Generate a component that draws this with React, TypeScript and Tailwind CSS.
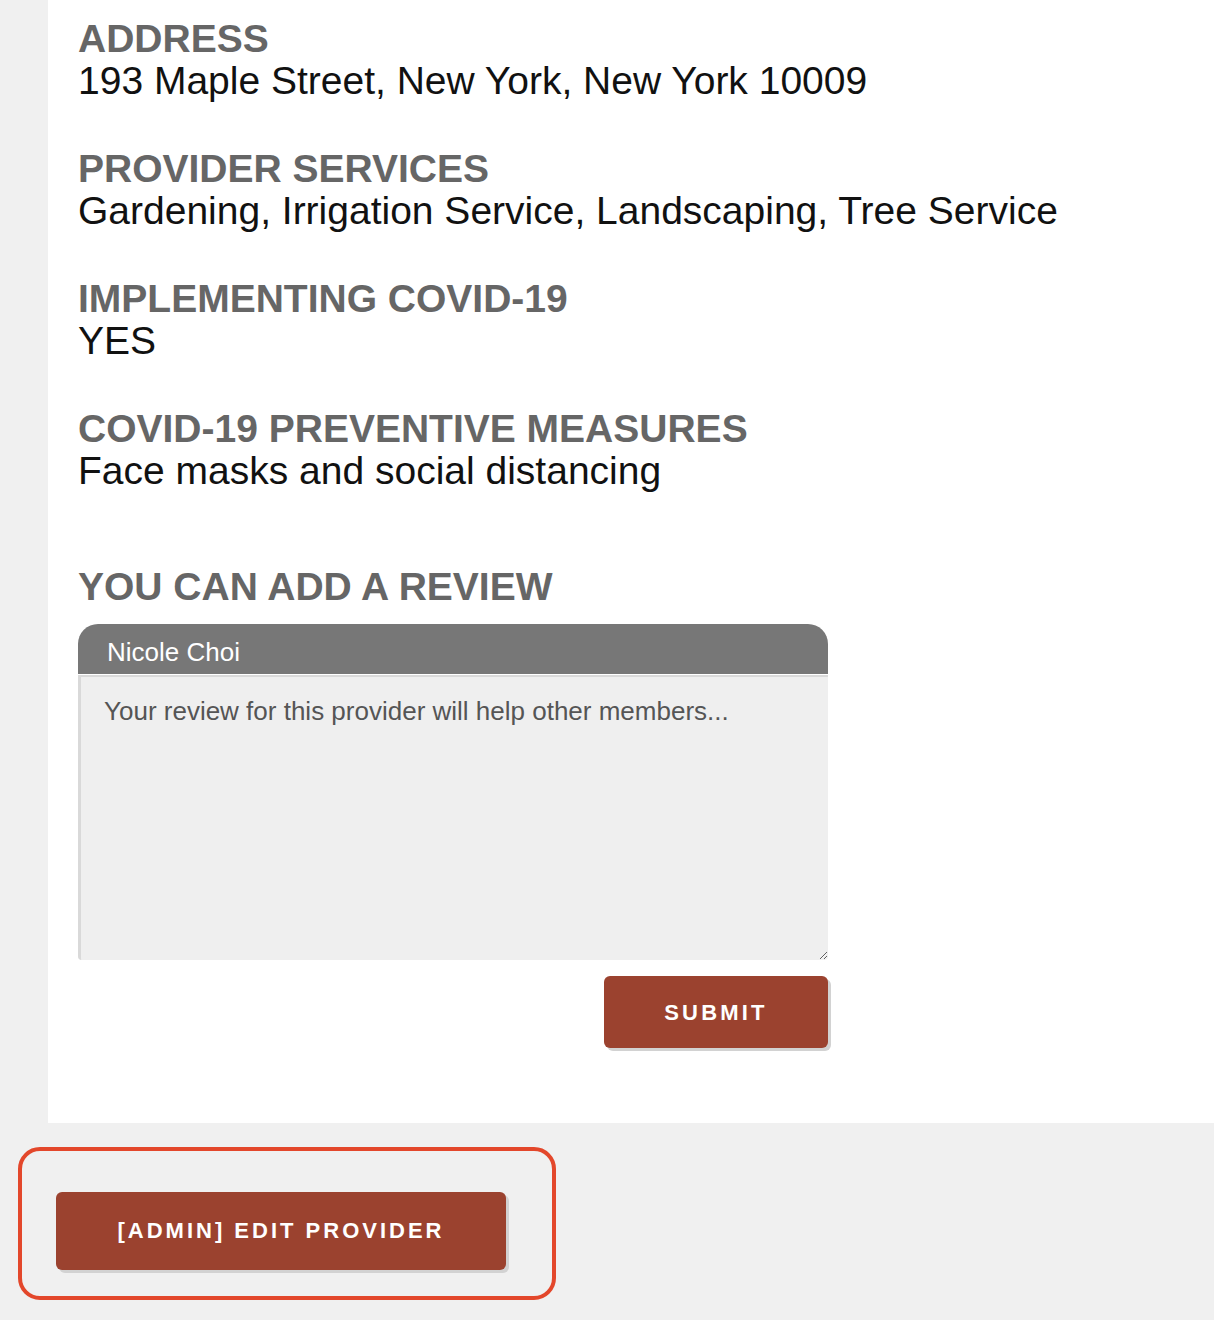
import { useState } from 'react'

const details = [
  { label: 'ADDRESS', value: '193 Maple Street, New York, New York 10009' },
  { label: 'PROVIDER SERVICES', value: 'Gardening, Irrigation Service, Landscaping, Tree Service' },
  { label: 'IMPLEMENTING COVID-19', value: 'YES' },
  { label: 'COVID-19 PREVENTIVE MEASURES', value: 'Face masks and social distancing' },
]

const ProviderDetail = () => {
  const [review, setReview] = useState('')

  return (
    <div className="min-h-[1320px] bg-[#f0f0f0] font-['Liberation_Sans',Arial,sans-serif]">
      {/* Provider info panel */}
      <section className="ml-[48px] bg-white pl-[30px] pt-[18px] pb-[75px]">
        <div className="flex flex-col gap-[46px]">
          {details.map((item) => (
            <div key={item.label} className="text-[39px] leading-[42px]">
              <h3 className="font-bold text-[#666666]">{item.label}</h3>
              <p className="text-[#111111]">{item.value}</p>
            </div>
          ))}
        </div>

        {/* Review form */}
        <div className="mt-[74px] w-[750px]">
          <h3 className="text-[39px] font-bold leading-[42px] text-[#666666]">YOU CAN ADD A REVIEW</h3>
          <div className="mt-[16px] h-[50px] rounded-t-[20px] bg-[#777777] pl-[29px] pt-[13px] text-[26px] leading-[30px] text-white">
            Nicole Choi
          </div>
          <textarea
            value={review}
            onChange={(e) => setReview(e.target.value)}
            placeholder="Your review for this provider will help other members..."
            className="mt-[1px] block h-[285px] w-full rounded-b-[4px] bg-[#efefef] pl-[26px] pt-[21px] text-[26px] leading-[30px] text-[#333333] shadow-[inset_3px_2px_0_#d9d9d9] outline-none placeholder:text-[#555555]"
          />
          <div className="mt-[16px] flex justify-end">
            <button className="h-[72px] w-[224px] rounded-[6px] bg-[#9b422f] text-[22px] font-bold tracking-[3.2px] text-white shadow-[3px_3px_0_#d2d2d2]">
              SUBMIT
            </button>
          </div>
        </div>
      </section>

      {/* Admin actions */}
      <div className="ml-[18px] mt-[24px] h-[153px] w-[538px] rounded-[22px] border-[4px] border-[#e3472b] pl-[34px] pt-[41px]">
        <button className="h-[78px] w-[450px] rounded-[6px] bg-[#9b422f] pb-[2px] text-[22px] font-bold tracking-[3px] text-white shadow-[3px_3px_0_#d2d2d2]">
          [ADMIN] EDIT PROVIDER
        </button>
      </div>
    </div>
  )
}

export default function App() {
  return <ProviderDetail />
}
